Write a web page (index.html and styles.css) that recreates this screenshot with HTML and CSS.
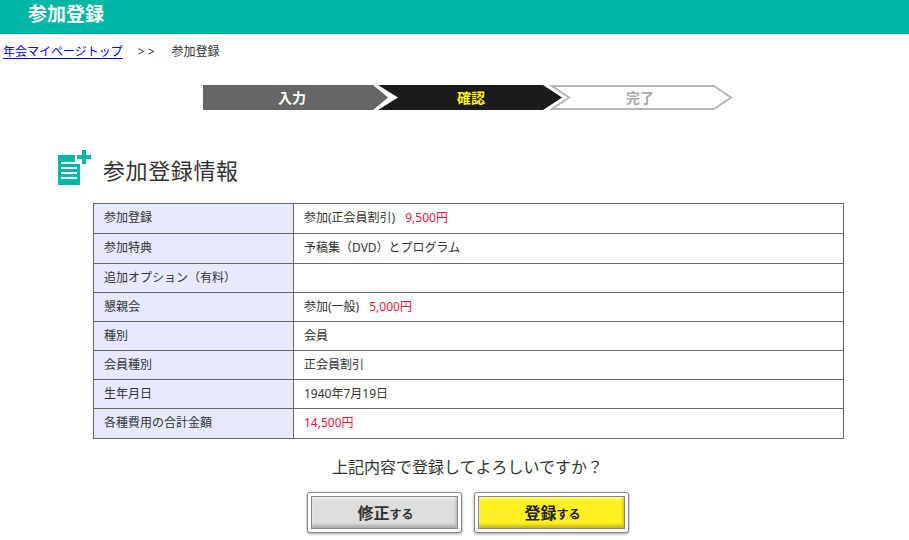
FILE: index.html
```
<!DOCTYPE html>
<html lang="ja">
<head>
<meta charset="utf-8">
<title>参加登録</title>
<link rel="stylesheet" href="styles.css">
</head>
<body>
<header class="topbar"><h1 class="topbar-title">参加登録</h1></header>
<nav class="crumbs"><a href="#">年会マイページトップ</a><span class="crumb-sep">&gt;&gt;</span><span>参加登録</span></nav>
<ol class="steps">
  <li class="step step-one"><span>入力</span></li>
  <li class="step step-two"><span>確認</span></li>
  <li class="step step-three">
    <svg class="step-outline" width="185" height="25" viewBox="0 0 185 25"><path d="M3 1H165L182 12.5L165 24H3L20 12.5Z" fill="#fff" stroke="#b7b7b7" stroke-width="2"/></svg>
    <span>完了</span>
  </li>
</ol>
<section class="info">
  <div class="info-head">
    <svg class="info-icon" width="34" height="36" viewBox="0 0 34 36"><path d="M1 5H18V14H23V35H1Z" fill="#00b6a5"/><path d="M4 13H19M4 18H20M4 23H20M4 28H20" stroke="#fff" stroke-width="2"/><path d="M20 7H34M27 0V14" stroke="#00b6a5" stroke-width="4"/></svg>
    <h2 class="info-title">参加登録情報</h2>
  </div>
  <table class="info-table">
    <tr class="r30"><th>参加登録</th><td>参加(正会員割引)<span class="price">9,500円</span></td></tr>
    <tr class="r30"><th>参加特典</th><td>予稿集（DVD）とプログラム</td></tr>
    <tr><th>追加オプション（有料）</th><td></td></tr>
    <tr><th>懇親会</th><td>参加(一般)<span class="price">5,000円</span></td></tr>
    <tr><th>種別</th><td>会員</td></tr>
    <tr><th>会員種別</th><td>正会員割引</td></tr>
    <tr><th>生年月日</th><td>1940年7月19日</td></tr>
    <tr class="r30"><th>各種費用の合計金額</th><td class="total">14,500円</td></tr>
  </table>
  <p class="question">上記内容で登録してよろしいですか？</p>
  <div class="actions">
    <button class="btn btn-gray" type="button"><span class="btn-face">修正<small>する</small></span></button>
    <button class="btn btn-yellow" type="button"><span class="btn-face">登録<small>する</small></span></button>
  </div>
</section>
</body>
</html>
```
FILE: styles.css
```
* { box-sizing: border-box; }
html, body { margin: 0; padding: 0; }
body {
  width: 909px;
  height: 540px;
  overflow: hidden;
  background: #fff;
  color: #333;
  font-family: "Noto Sans", "Noto Sans CJK JP", sans-serif;
  font-size: 12px;
}
.topbar {
  height: 34px;
  background: #00b6a5;
  padding-left: 28px;
}
.topbar-title {
  margin: 0;
  color: #fff;
  font-size: 19px;
  font-weight: 700;
  line-height: 29px;
}
.crumbs {
  height: 18px;
  margin-top: 9px;
  padding-left: 3px;
  line-height: 18px;
  display: flex;
}
.crumbs a { color: #00f; text-underline-offset: 2px; }
.crumb-sep { margin: 0 14px 0 15px; letter-spacing: 3px; }
.steps {
  list-style: none;
  margin: 24px 0 0 203px;
  padding: 0;
  display: flex;
  height: 25px;
}
.step {
  position: relative;
  height: 25px;
  line-height: 25px;
  text-align: center;
  font-size: 14px;
  font-weight: 700;
}
.step span { position: relative; }
.step-one {
  width: 185px;
  padding-right: 7px;
  background: #666;
  color: #fff;
  clip-path: polygon(0 0, 170px 0, 185px 50%, 170px 100%, 0 100%);
}
.step-two {
  width: 184px;
  margin-left: -10px;
  padding-left: 2px;
  background: #1a1a1a;
  color: #fff21e;
  clip-path: polygon(0 0, 165px 0, 184px 50%, 165px 100%, 0 100%, 20px 50%);
}
.step-three {
  width: 185px;
  margin-left: -13px;
  padding-right: 3px;
  color: #aaa;
}
.step-outline { position: absolute; left: 0; top: 0; }
.info { padding-top: 40px; }
.info-head {
  display: flex;
  align-items: flex-start;
  height: 45px;
  padding-left: 57px;
}
.info-icon { flex: none; }
.info-title {
  margin: 5px 0 0 12px;
  font-size: 22px;
  font-weight: 400;
  line-height: 30px;
  letter-spacing: 0.6px;
}
.info-table {
  width: 751px;
  height: 235px;
  margin: 8px 0 0 93px;
  border-collapse: collapse;
  table-layout: fixed;
}
.info-table th, .info-table td {
  border: 1px solid #666;
  padding: 0 10px 2px;
  font-weight: 400;
  text-align: left;
  height: 29px;
}
.info-table th { width: 200px; background: #e6e9ff; }
.info-table .r30 th, .info-table .r30 td { height: 30px; padding-bottom: 4px; }
.price { color: #f0143c; margin-left: 10px; }
.total { color: #f0143c; }
.question {
  margin: 17px 0 0;
  padding-left: 26px;
  text-align: center;
  font-size: 16px;
  line-height: 22px;
}
.actions {
  display: flex;
  justify-content: center;
  gap: 12px;
  margin-top: 14px;
  padding-left: 26px;
}
.btn {
  width: 155px;
  height: 41px;
  padding: 3px;
  border: 1px solid #888;
  border-radius: 3px;
  background: #fff;
  box-shadow: 0 1px 3px rgba(0,0,0,.4);
  color: #333;
  font-family: inherit;
  font-size: 16px;
  font-weight: 700;
}
.btn-face {
  display: block;
  height: 100%;
  padding-left: 3px;
  border: 1px solid #888;
  line-height: 33px;
  box-shadow: inset -1px -3px 3px rgba(0,0,0,.22), inset 1px 2px 2px rgba(255,255,255,.5);
}
.btn small { font-size: 12px; }
.btn-gray .btn-face { background: #dedede; }
.btn-yellow .btn-face { background: #fff021; color: #222; }
```
